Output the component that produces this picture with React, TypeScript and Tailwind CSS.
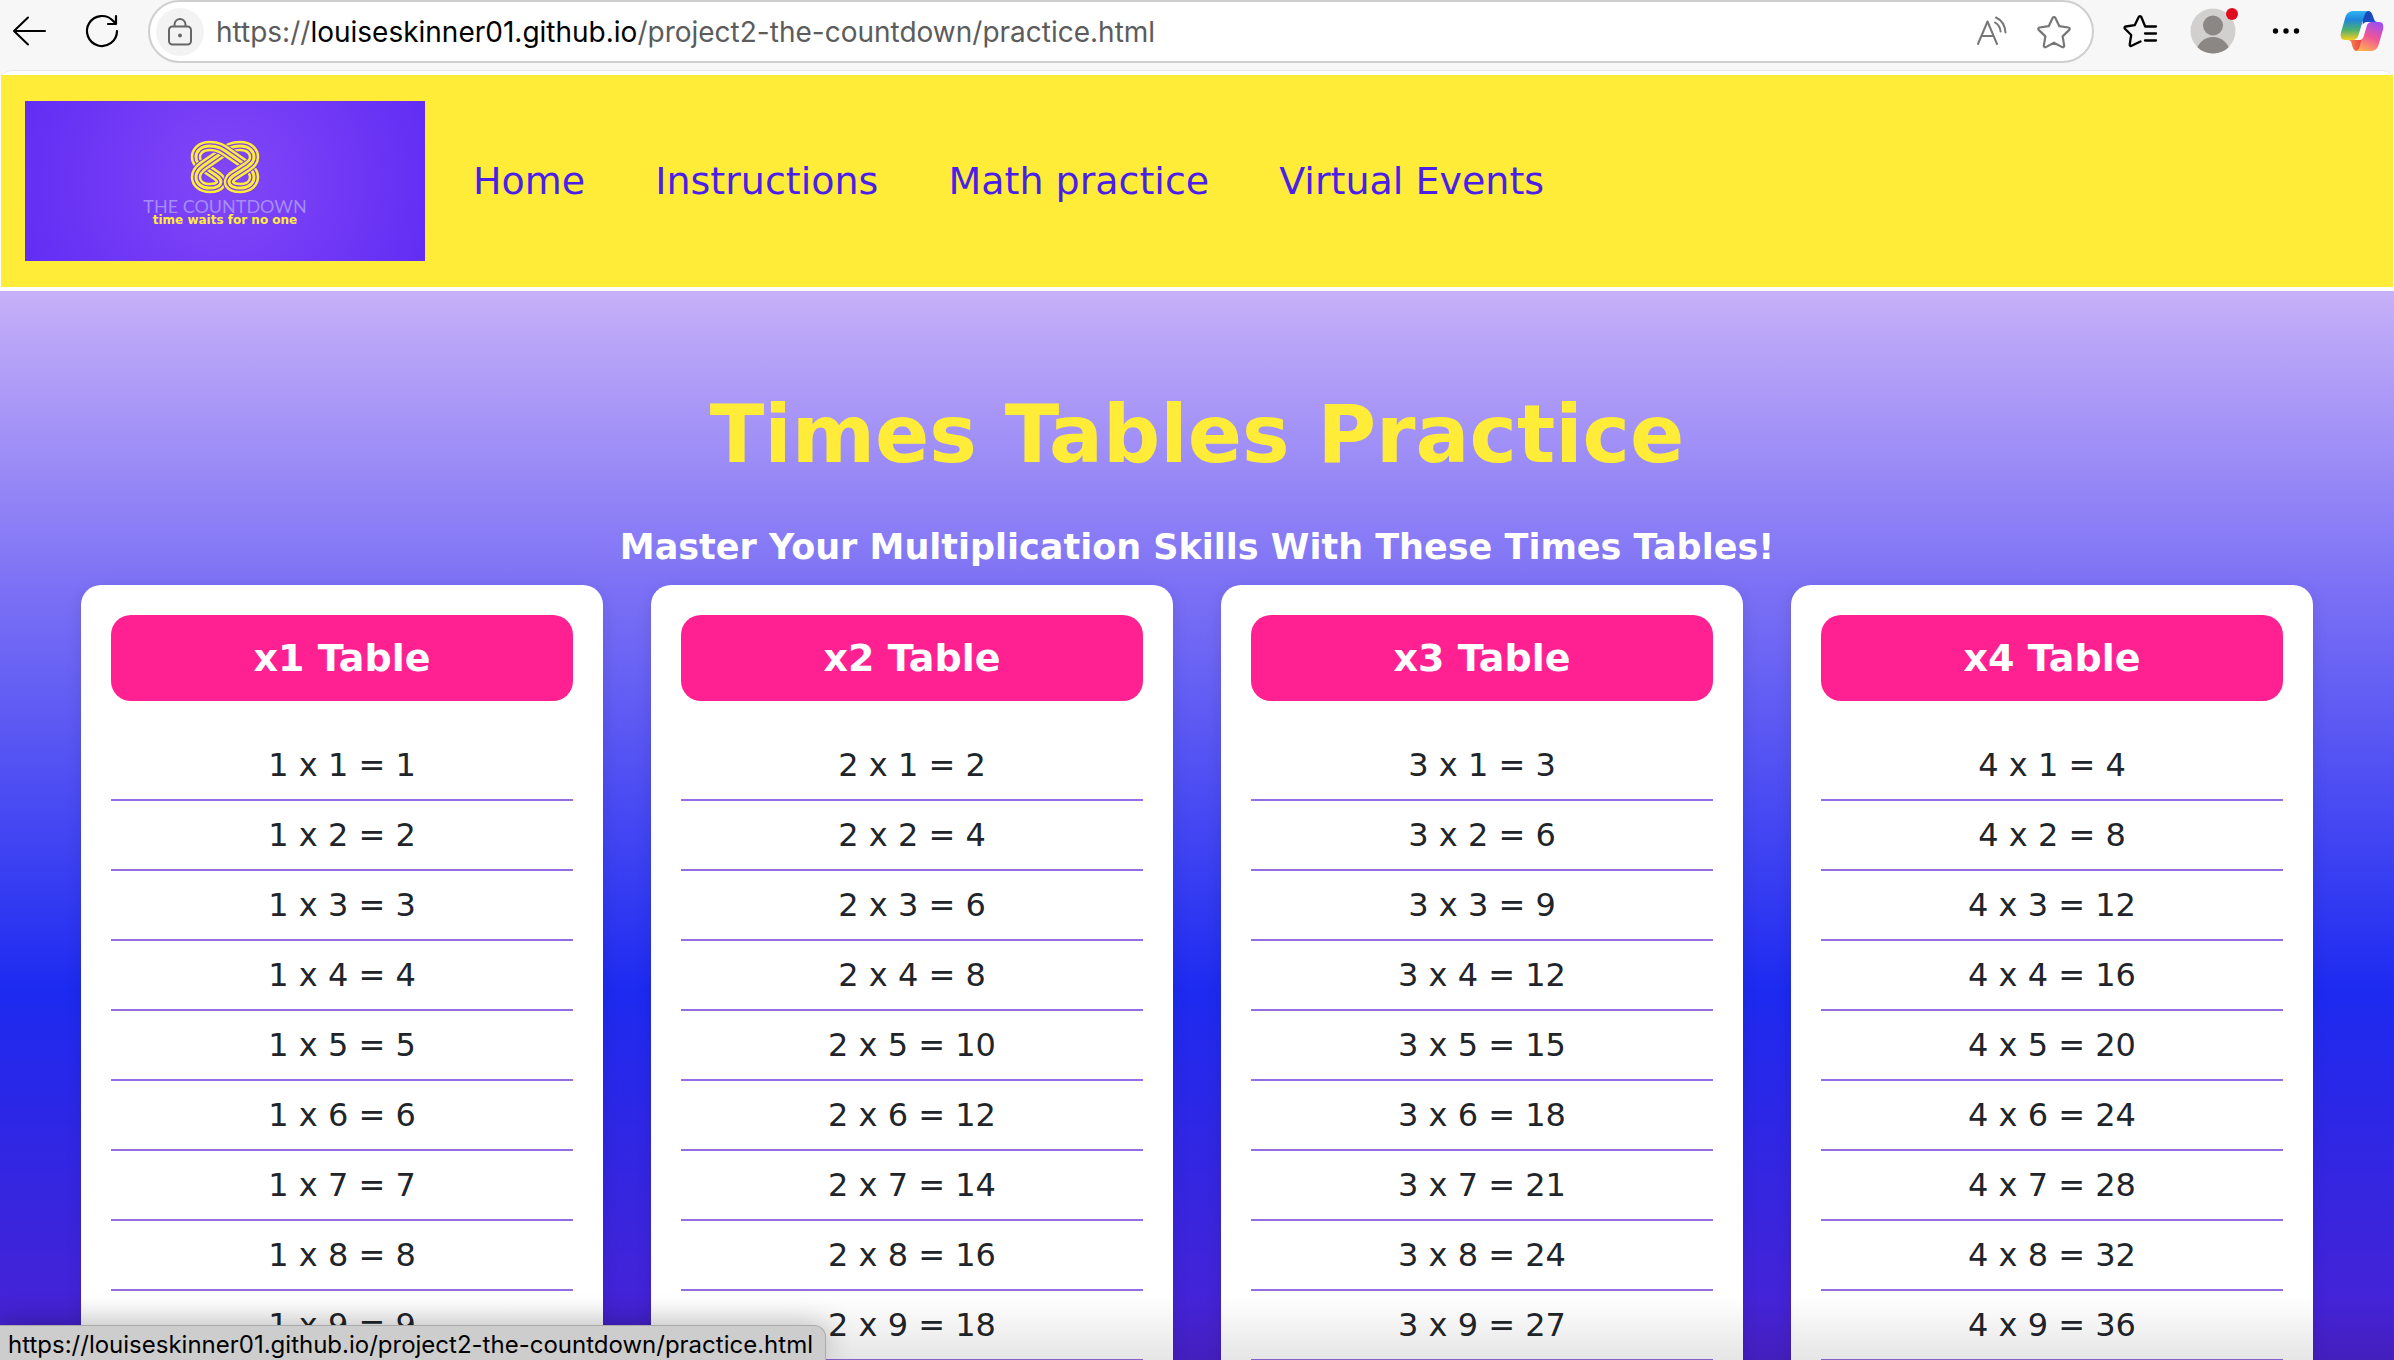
import React from 'react';

const cards = [1, 2, 3, 4];
const factors = [1, 2, 3, 4, 5, 6, 7, 8, 9, 10, 11, 12];
const nav = ['Home', 'Instructions', 'Math practice', 'Virtual Events'];

function BackIcon() {
  return (
    <svg className="h-9 w-9" viewBox="0 0 36 36" fill="none" stroke="#000" strokeWidth="2" strokeLinecap="round" strokeLinejoin="round">
      <path d="M33 18H2M16 4.500L2 18l14 13.500" />
    </svg>
  );
}

function ReloadIcon() {
  return (
    <svg className="h-9 w-9" viewBox="0 0 36 36" fill="none" stroke="#000" strokeWidth="2.2" strokeLinecap="round" strokeLinejoin="round">
      <path d="M33 18A15 15 0 1 1 29 7.800L32 11M32 3v8h-8" />
    </svg>
  );
}

function LockIcon() {
  return (
    <svg className="h-7 w-7" viewBox="0 0 28 28" fill="none" stroke="#666" strokeWidth="2">
      <rect x="3" y="8.500" width="22" height="18" rx="3.500" />
      <path d="M8.500 8.500V6.500a5.500 5.500 0 0 1 11 0v2" />
      <circle cx="14" cy="17.500" r="2" fill="#666" stroke="none" />
    </svg>
  );
}

function ReadAloudIcon() {
  return (
    <svg className="h-8 w-8" viewBox="0 0 32 32" fill="none" stroke="#777" strokeWidth="2" strokeLinecap="round" strokeLinejoin="round">
      <path d="M2 28L11.500 5.500L21 28M5.500 20h12M19 6.500c3.200 1.800 5.200 5 5.600 9M20 1.500c5.500 2.500 9 8 9.500 15" />
    </svg>
  );
}

function StarIcon() {
  return (
    <svg className="h-9 w-9" viewBox="0 0 36 36" fill="none" stroke="#777" strokeWidth="2.200" strokeLinejoin="round">
      <path d="M16.700 3.800a1.500 1.500 0 0 1 2.600 0l4 8.400 9.200 1.300a1.400 1.400 0 0 1 .8 2.400l-6.700 6.500 1.600 9.200a1.400 1.400 0 0 1-2 1.500L18 28.700l-8.200 4.400a1.400 1.400 0 0 1-2-1.500l1.600-9.200-6.700-6.500a1.400 1.400 0 0 1 .8-2.400l9.200-1.300z" />
    </svg>
  );
}

function FavoritesIcon() {
  return (
    <svg className="h-9 w-9" viewBox="0 0 36 36" fill="none" stroke="#000" strokeWidth="2.300" strokeLinecap="round" strokeLinejoin="round">
      <path d="M34 13.500H23.200L19.300 4a1.400 1.400 0 0 0-2.600 0l-4 8.200-9 1.300a1.300 1.300 0 0 0-.7 2.300l6.200 6.200-1.500 9.400a1.300 1.300 0 0 0 1.900 1.400L18.500 28.500M23 20.500h11M23 27.500h11" />
    </svg>
  );
}

function CopilotIcon() {
  return (
    <svg className="h-11 w-11" viewBox="0 0 44 44">
      <defs>
        <linearGradient id="cp-a" x1="0" y1="0" x2="0" y2="1">
          <stop offset="0" stopColor="#2fb4f3" />
          <stop offset="0.300" stopColor="#1f86dd" />
          <stop offset="0.650" stopColor="#4fb06f" />
          <stop offset="1" stopColor="#f7cf1f" />
        </linearGradient>
        <linearGradient id="cp-b" x1="0.700" y1="0" x2="0.300" y2="1">
          <stop offset="0" stopColor="#a04ff0" />
          <stop offset="0.500" stopColor="#ef5596" />
          <stop offset="1" stopColor="#ffae52" />
        </linearGradient>
        <linearGradient id="cp-c" x1="0" y1="0" x2="1" y2="1">
          <stop offset="0" stopColor="#1741a8" />
          <stop offset="1" stopColor="#2057e0" />
        </linearGradient>
        <linearGradient id="cp-d" x1="0" y1="0" x2="1" y2="0">
          <stop offset="0" stopColor="#ff8a45" />
          <stop offset="1" stopColor="#e0394c" />
        </linearGradient>
      </defs>
      <path d="M22 2h6c2.500 0 4 2 4.700 4.500L34 10c.6 2 1.500 3 3.500 3H29c-4 0-5 2-6 5z" fill="url(#cp-c)" />
      <path d="M22 42h-5c-2.500 0-3.800-2-4.600-4.500L11.500 34c-.6-2-1.500-3-3.500-3h10c4 0 5-2 6-5z" fill="url(#cp-d)" />
      <path d="M14 2h15c-3 0-4.200 3-5 6l-5.500 18c-1 3.500-2.500 5-6 5H5c-4 0-5-3.500-4-7.500l4-14C6.300 4.500 8.500 2 14 2z" fill="url(#cp-a)" />
      <path d="M30 42H15c3 0 4.200-3 5-6l5.500-18c1-3.500 2.500-5 6-5H39c4 0 5 3.500 4 7.500l-4 14C37.700 39.500 35.500 42 30 42z" fill="url(#cp-b)" />
      <path d="M32 13c-4 0-4.800 2.500-5.500 5l-2.700 9c-.9 3-2.300 4-5.800 4h-6c5 0 6.300-1.500 7.300-5l2.500-8c1-3.500 2.200-5 6.200-5z" fill="#f7f7f7" />
    </svg>
  );
}

function KnotBand({ d }: { d: string }) {
  return (
    <>
      <path d={d} stroke="#7940f5" strokeWidth="25" />
      <path d={d} stroke="#ffec38" strokeWidth="21" />
      <path d={d} stroke="#7940f5" strokeWidth="11" />
      <path d={d} stroke="#ffec38" strokeWidth="6" />
    </>
  );
}

function KnotLogo() {
  return (
    <svg className="h-[54px] w-[70px]" viewBox="0 0 140 108" fill="none">
      <KnotBand d="M40 12C20 12 12 24 12 34C12 44 18 48 26 53L54 72C70 84 60 96 40 96" />
      <KnotBand d="M40 96C22 96 12 86 12 74C12 64 18 58 26 52L62 27C76 17 84 12 100 12" />
      <KnotBand d="M40 12C56 12 64 17 78 27L114 52C122 58 128 64 128 74C128 86 118 96 100 96" />
      <KnotBand d="M100 12C120 12 128 24 128 34C128 44 122 48 114 54L86 72C70 84 80 96 100 96" />
    </svg>
  );
}

export default function App() {
  return (
    <div className="relative flex h-screen flex-col overflow-hidden bg-[#f7f7f7] font-['DejaVu_Sans',sans-serif]">
      <header className="flex h-[70px] shrink-0 items-start pl-3 pr-2.5 font-['Inter',sans-serif]">
        <div className="flex h-[62px] items-center gap-9">
          <button aria-label="Back"><BackIcon /></button>
          <button aria-label="Reload"><ReloadIcon /></button>
        </div>
        <div className="ml-7 flex h-[63px] flex-1 items-center rounded-full border-2 border-[#cfcfcf] bg-white pl-1.5 pr-5">
          <button aria-label="Site information" className="flex h-12 w-12 shrink-0 items-center justify-center rounded-full bg-[#f3f3f3]"><LockIcon /></button>
          <div className="ml-3 flex-1 text-[28px] text-[#5c5c5c]">
            https://<span className="text-black">louiseskinner01.github.io</span>/project2-the-countdown/practice.html
          </div>
          <button aria-label="Read aloud"><ReadAloudIcon /></button>
          <button aria-label="Add to favourites" className="ml-7"><StarIcon /></button>
        </div>
        <div className="flex h-[62px] items-center pl-7">
          <button aria-label="Favourites"><FavoritesIcon /></button>
          <button aria-label="Profile" className="relative ml-8">
            <svg className="h-[46px] w-[46px]" viewBox="0 0 46 46">
              <defs><clipPath id="avatar"><circle cx="23" cy="23" r="22.500" /></clipPath></defs>
              <circle cx="23" cy="23" r="22.500" fill="#d2d0ce" />
              <g clipPath="url(#avatar)" fill="#8a8785">
                <circle cx="23" cy="17.500" r="10" />
                <circle cx="23" cy="46" r="17" />
              </g>
            </svg>
            <span className="absolute -right-0.5 top-0 h-3 w-3 rounded-full bg-[#e00b1c]" />
          </button>
          <button aria-label="Settings and more" className="ml-9">
            <svg className="h-7 w-7" viewBox="0 0 28 28"><circle cx="3.500" cy="14" r="2.700" /><circle cx="14" cy="14" r="2.700" /><circle cx="24.500" cy="14" r="2.700" /></svg>
          </button>
          <button aria-label="Copilot" className="ml-10"><CopilotIcon /></button>
        </div>
      </header>

      <div className="flex min-h-0 flex-1 flex-col rounded-t-xl border-t border-[#e8e8e8] bg-white pt-1">
        <nav className="mx-px flex h-[212px] shrink-0 items-center bg-[#ffec38] pl-6">
          <a href="#home" aria-label="The Countdown" className="flex h-40 w-[400px] flex-col items-center bg-[radial-gradient(circle_at_center,#8247f7,#622df4)] pt-[39px]">
            <KnotLogo />
            <span className="mt-1 font-['Lato',sans-serif] text-[18px] leading-4 text-[#a68cf5]">THE COUNTDOWN</span>
            <span className="text-[12px] font-bold leading-3 text-[#ffec38]">time waits for no one</span>
          </a>
          <ul className="flex gap-[70px] pl-12 text-[38px] text-[#4a1fe8]">
            {nav.map((item) => (
              <li key={item}><a href={'#' + item.toLowerCase().replace(' ', '-')}>{item}</a></li>
            ))}
          </ul>
        </nav>
        <main className="mt-1 min-h-0 flex-1 overflow-hidden bg-[linear-gradient(to_bottom,#c6b0f8_0px,#7b70f5_300px,#1d2af0_700px,#4b22d2_1068px)] px-[81px] pt-[96px] text-center">
          <h1 className="text-[80px] font-bold leading-24 text-[#ffec38]">Times Tables Practice</h1>
          <h2 className="mt-[42px] text-[35px] font-bold leading-11 text-white">Master Your Multiplication Skills With These Times Tables!</h2>
          <div className="mt-4 grid grid-cols-4 gap-12">
            {cards.map((n) => (
              <section key={n} className="rounded-[20px] bg-white p-[30px] shadow-[0_4px_16px_rgba(0,0,0,0.1)]">
                <h3 className="mb-[30px] rounded-[20px] bg-[#ff2191] py-[19px] text-[38px] font-bold leading-12 text-white">x{n} Table</h3>
                <ul className="text-[32px] text-[#212529]">
                  {factors.map((f) => (
                    <li key={f} className="h-[70px] border-b-2 border-[#936de2] leading-[68px]">{n} x {f} = {n * f}</li>
                  ))}
                </ul>
              </section>
            ))}
          </div>
        </main>
      </div>

      <div className="pointer-events-none absolute bottom-0 left-0 h-16 w-full bg-linear-to-t from-black/10 to-transparent" />
      <div className="absolute bottom-0 left-0 rounded-tr-xl border-r border-t border-[#aaa] bg-[#cdcdcd] pl-2 pr-3 pt-1 font-['Inter',sans-serif] text-[24px] leading-[30px] text-black shadow-[0_0_30px_rgba(0,0,0,0.25)]">
        https://louiseskinner01.github.io/project2-the-countdown/practice.html
      </div>
    </div>
  );
}
